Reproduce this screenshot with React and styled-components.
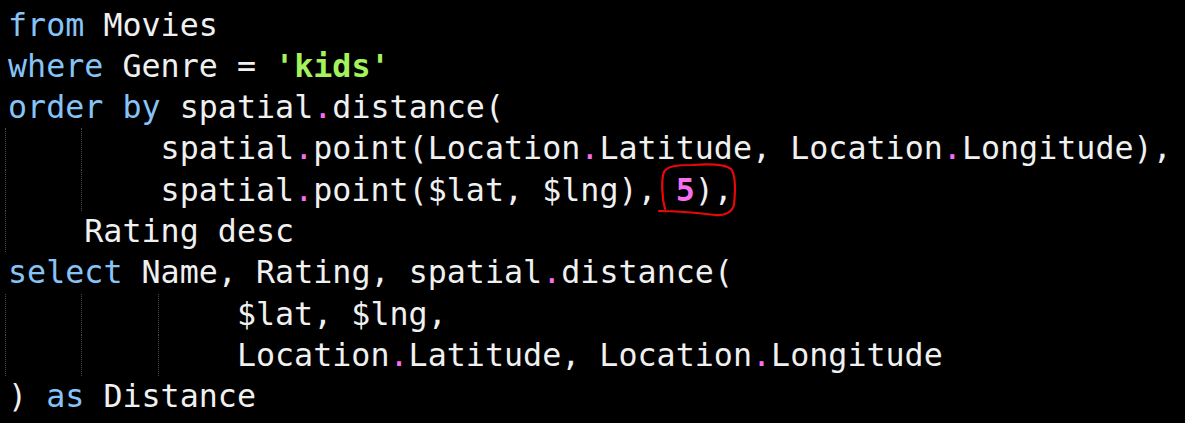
import React from "react";
import styled, { createGlobalStyle } from "styled-components";

const GlobalStyle = createGlobalStyle`
  html, body {
    margin: 0;
    padding: 0;
    background: #000;
  }
`;

const colors = {
  text: "#f0f0f0",
  kw: "#86c4f8",
  str: "#a4f25e",
  num: "#f86ef0",
  dot: "#f86ef0",
};

const lines = [
  { indent: 0, tokens: [["kw", "from"], ["text", " Movies"]] },
  {
    indent: 0,
    tokens: [["kw", "where"], ["text", " Genre = "], ["str", "'kids'"]],
  },
  {
    indent: 0,
    tokens: [
      ["kw", "order by"],
      ["text", " spatial"],
      ["dot", "."],
      ["text", "distance("],
    ],
  },
  {
    indent: 8,
    tokens: [
      ["text", "spatial"],
      ["dot", "."],
      ["text", "point(Location"],
      ["dot", "."],
      ["text", "Latitude, Location"],
      ["dot", "."],
      ["text", "Longitude),"],
    ],
  },
  {
    indent: 8,
    tokens: [
      ["text", "spatial"],
      ["dot", "."],
      ["text", "point($lat, $lng),"],
      ["mark", " "],
    ],
  },
  { indent: 4, tokens: [["text", "Rating desc"]] },
  {
    indent: 0,
    tokens: [
      ["kw", "select"],
      ["text", " Name, Rating, spatial"],
      ["dot", "."],
      ["text", "distance("],
    ],
  },
  { indent: 12, tokens: [["text", "$lat, $lng,"]] },
  {
    indent: 12,
    tokens: [
      ["text", "Location"],
      ["dot", "."],
      ["text", "Latitude, Location"],
      ["dot", "."],
      ["text", "Longitude"],
    ],
  },
  {
    indent: 0,
    tokens: [["text", ") "], ["kw", "as"], ["text", " Distance"]],
  },
];

const Editor = styled.div`
  background: #000;
  width: 1185px;
  height: 423px;
  box-sizing: border-box;
  padding: 4.5px 0 0 8px;
  overflow: hidden;
  font-family: "DejaVu Sans Mono", "Liberation Mono", monospace;
  font-size: 31.7px;
  color: ${colors.text};
`;

const Line = styled.div`
  display: flex;
  align-items: center;
  height: 41.3px;
  line-height: 41.3px;
  white-space: pre;
`;

const Guide = styled.span`
  align-self: stretch;
  box-sizing: border-box;
  width: calc(4ch + 3px);
  margin-left: -3px;
  border-left: 1px dotted #4a4a4a;
`;

const Token = styled.span`
  color: ${(p) => colors[p.$kind] || colors.text};
  font-weight: ${(p) => (p.$kind === "str" || p.$kind === "num" ? 700 : 400)};
`;

const Annotation = styled.span`
  position: relative;
`;

const Scribble = styled.svg`
  position: absolute;
  left: 0;
  top: -10px;
  width: 82px;
  height: 60px;
  overflow: visible;
  pointer-events: none;
`;

const Circled = () => (
  <Annotation>
    <Token $kind="text"> </Token>
    <Token $kind="num">5</Token>
    <Token $kind="text">),</Token>
    <Scribble viewBox="0 0 82 60">
      <path
        d="M8 49 C5 38 4 20 7 12 C10 6 20 5 35 5 C50 4 68 4 74 9 C79 15 78 35 77 45 C75 53 66 56 58 55 C42 53 20 51 2 51"
        fill="none"
        stroke="#e80808"
        strokeWidth="2.2"
        strokeLinecap="round"
      />
    </Scribble>
  </Annotation>
);

export default function App() {
  return (
    <>
      <GlobalStyle />
      <Editor>
        {lines.map((line, i) => (
          <Line key={i}>
            {Array.from({ length: line.indent / 4 }).map((_, g) => (
              <Guide key={g} />
            ))}
            {line.tokens.map(([kind, value], j) =>
              kind === "mark" ? (
                <Circled key={j} />
              ) : (
                <Token key={j} $kind={kind}>
                  {value}
                </Token>
              )
            )}
          </Line>
        ))}
      </Editor>
    </>
  );
}
